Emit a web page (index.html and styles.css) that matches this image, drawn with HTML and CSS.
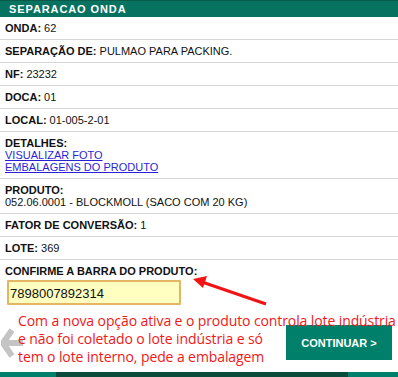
FILE: index.html
```html
<!DOCTYPE html>
<html lang="pt">
<head>
    <meta charset="UTF-8">
    <title>Separacao Onda</title>
    <link rel="stylesheet" href="styles.css">
</head>
<body>
<div class="page">
    <div class="topBar">SEPARACAO ONDA</div>

    <div class="row"><b>ONDA:</b> 62</div>
    <div class="row"><b>SEPARAÇÃO DE:</b> PULMAO PARA PACKING.</div>
    <div class="row"><b>NF:</b> 23232</div>
    <div class="row"><b>DOCA:</b> 01</div>
    <div class="row"><b>LOCAL:</b> 01-005-2-01</div>
    <div class="row">
        <b>DETALHES:</b><br>
        <a href="#">VISUALIZAR FOTO</a><br>
        <a href="#">EMBALAGENS DO PRODUTO</a>
    </div>
    <div class="row">
        <b>PRODUTO:</b><br>
        052.06.0001 - BLOCKMOLL (SACO COM 20 KG)
    </div>
    <div class="row"><b>FATOR DE CONVERSÃO:</b> 1</div>
    <div class="row"><b>LOTE:</b> <span class="lote">369</span></div>
    <div class="row last">
        <b>CONFIRME A BARRA DO PRODUTO:</b>
        <div class="barcode">
            <input type="text" value="7898007892314">
        </div>
    </div>

    <div class="actions">
        <button class="btnNext">CONTINUAR &gt;</button>
    </div>

    <div class="footer">
        <span class="tab"></span>
        <span class="tab dark"></span>
        <span class="tab"></span>
    </div>

    <!-- seta cinza de voltar -->
    <svg class="back" width="24" height="34" viewBox="0 0 24 34">
        <path d="M11 4 L2 17 L11 30 M3 17 L22 17" fill="none" stroke="#c4c4c4" stroke-width="6" stroke-linejoin="round"/>
    </svg>

    <!-- anotacao em vermelho -->
    <svg class="arrow" width="100" height="40" viewBox="0 0 100 40">
        <line x1="78" y1="31" x2="14" y2="9" stroke="#f01414" stroke-width="3"/>
        <polygon points="5,6 19,3 15,15" fill="#f01414"/>
    </svg>
    <p class="note">Com a nova opção ativa e o produto controla lote indústria<br>
        e não foi coletado o lote indústria e só<br>
        tem o lote interno, pede a embalagem</p>
</div>
</body>
</html>
```

FILE: styles.css
```css
* {
    box-sizing: border-box;
}

body {
    margin: 0;
    background: white;
    font-family: "Liberation Sans", Arial, sans-serif;
    color: #111;
}

.page {
    position: relative;
    width: 398px;
    height: 377px;
    overflow: hidden;
}

.topBar {
    height: 17px;
    background: #077260;
    border-top: 1px solid #0a5a4a;
    color: white;
    font-size: 11px;
    font-weight: bold;
    letter-spacing: 0.9px;
    line-height: 16px;
    padding-left: 9px;
}

.row {
    padding: 5px 5px;
    font-size: 11px;
    line-height: 12px;
    border-bottom: 1px solid #d6d6d6;
}

.row a {
    color: #2a1fd6;
}

.lote {
    font-size: 11px;
}

.row.last {
    border-bottom: none;
}

.barcode {
    margin-top: 3px;
    padding-left: 2px;
}

.barcode input {
    width: 174px;
    height: 25px;
    background: #ffffc0;
    border: 2px solid #e4b663;
    border-radius: 1px;
    font-family: "Liberation Sans", Arial, sans-serif;
    font-size: 13px;
    color: #111;
    padding: 1px 1px 0;
    outline: none;
}

.actions {
    display: flex;
    justify-content: flex-end;
    padding: 15px 6px 0 0;
}

.btnNext {
    width: 106px;
    height: 35px;
    background: #00806a;
    color: white;
    border: none;
    font-family: "Liberation Sans", Arial, sans-serif;
    font-size: 11px;
    font-weight: bold;
}

.footer {
    position: absolute;
    left: 0;
    bottom: 0;
    width: 100%;
    height: 5px;
    display: flex;
}

.footer .tab {
    flex: 56;
    background: #00806a;
}

.footer .tab.dark {
    flex: 292;
    background: #0b4b3b;
}

.footer .tab:last-child {
    flex: 50;
}

.back {
    position: absolute;
    left: 1px;
    top: 326px;
}

.arrow {
    position: absolute;
    left: 188px;
    top: 273px;
}

.note {
    position: absolute;
    left: 18px;
    top: 312px;
    margin: 0;
    white-space: nowrap;
    color: #f01818;
    font-family: "Open Sans", sans-serif;
    font-size: 14px;
    line-height: 18px;
    letter-spacing: -0.1px;
}
```
